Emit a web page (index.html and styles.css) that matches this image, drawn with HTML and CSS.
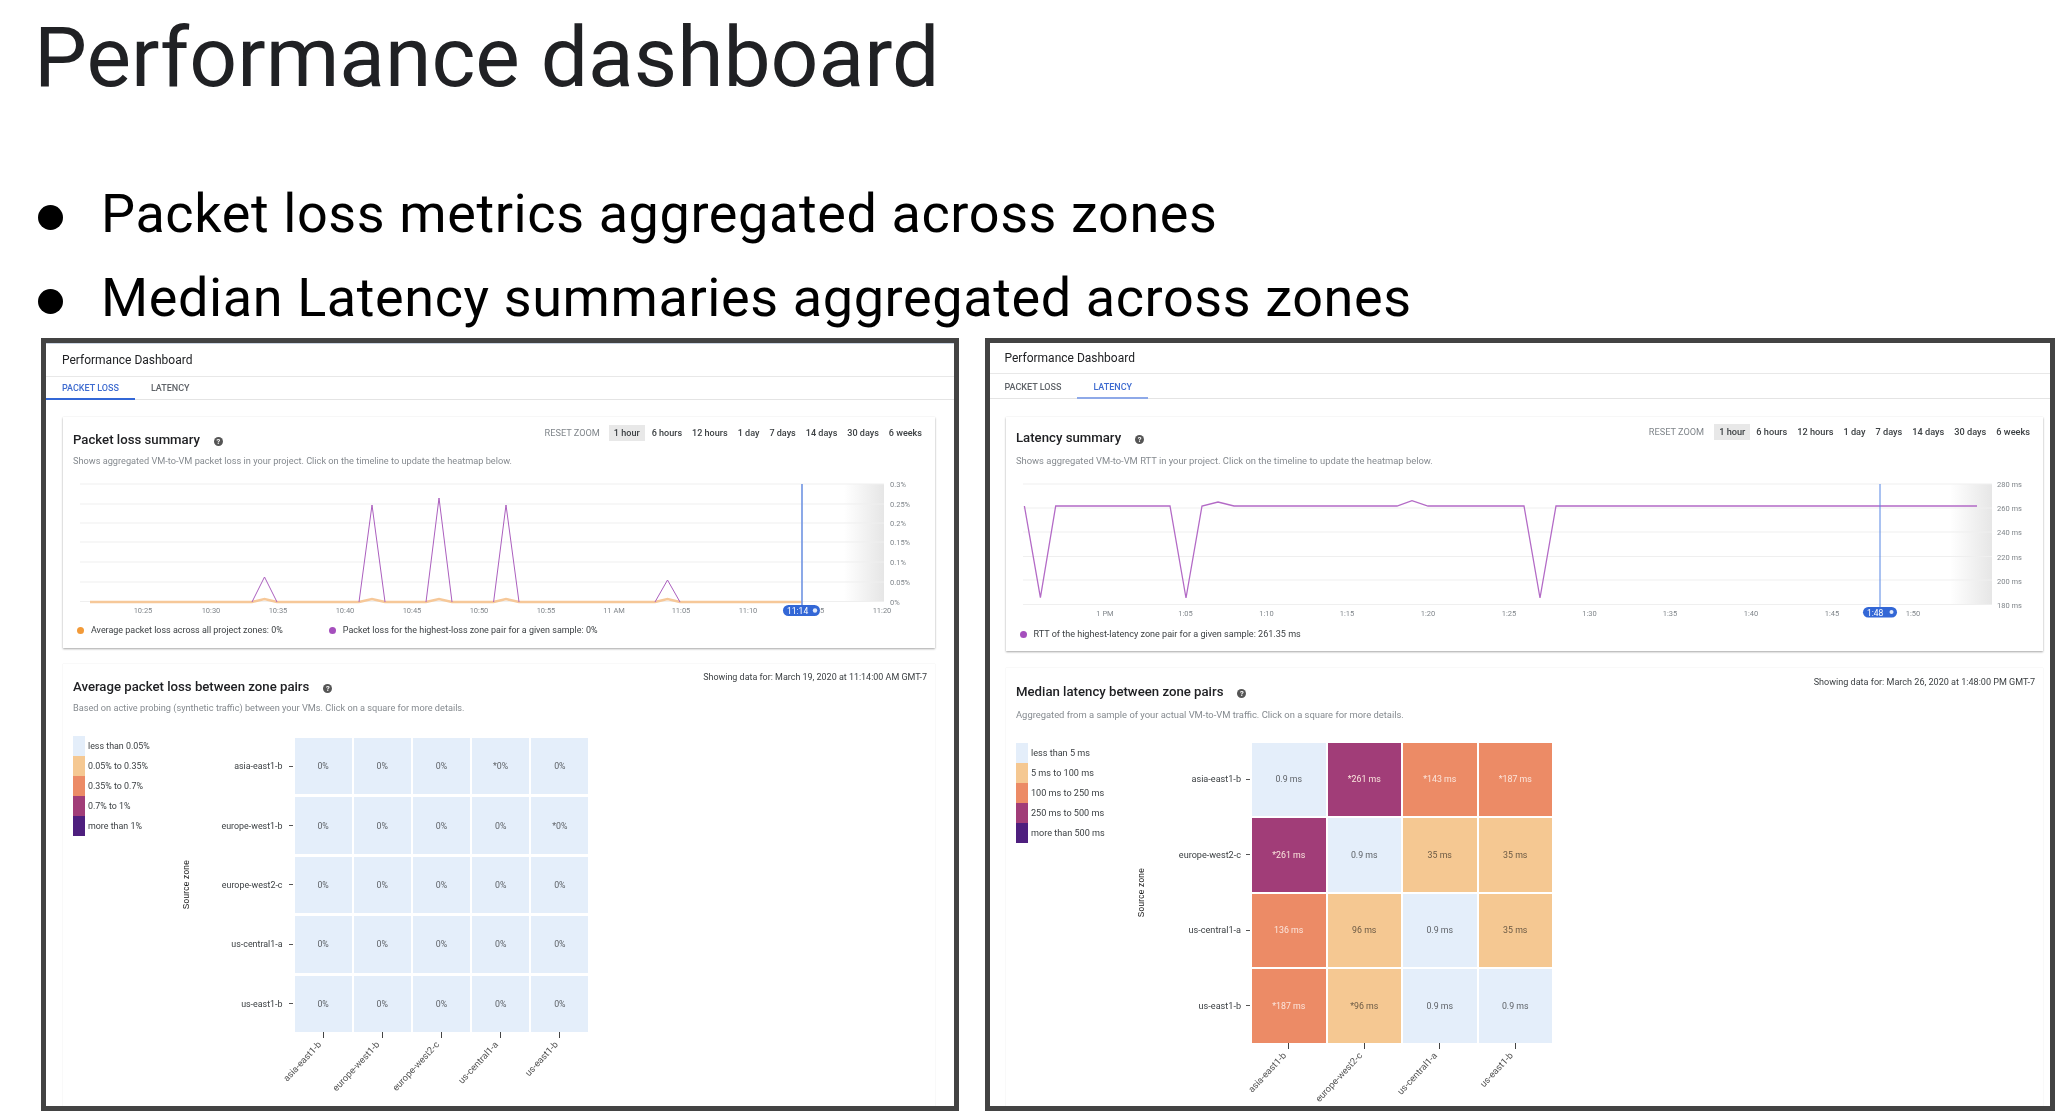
FILE: index.html
```html
<!DOCTYPE html>
<html lang="en">
<head>
<meta charset="utf-8">
<title>Performance dashboard</title>
<link rel="stylesheet" href="styles.css">
</head>
<body>
<main class="slide">
  <h1 class="slide-title">Performance dashboard</h1>
  <ul class="points">
    <li>Packet loss metrics aggregated across zones</li>
    <li>Median Latency summaries aggregated across zones</li>
  </ul>
  <div class="panels">
    <section class="panel panel-loss">
      <div class="panel-inner">
        <header class="app-title">Performance Dashboard</header>
        <nav class="tabs">
          <span class="tab active">PACKET LOSS</span>
          <span class="tab">LATENCY</span>
        </nav>
        <div class="card summary">
          <div class="card-head">
            <h2 class="card-title">Packet loss summary <i class="help">?</i></h2>
            <div class="range">
              <span class="reset">RESET ZOOM</span>
              <span class="sel">1 hour</span><span>6 hours</span><span>12 hours</span><span>1 day</span><span>7 days</span><span>14 days</span><span>30 days</span><span>6 weeks</span>
            </div>
          </div>
          <p class="desc">Shows aggregated VM-to-VM packet loss in your project. Click on the timeline to update the heatmap below.</p>
          <svg class="chart" width="872" height="147" viewBox="63 475 872 147">
            <defs>
              <linearGradient id="fadeA"><stop offset="0" stop-color="#fff"/><stop offset="1" stop-color="#e6e6e6"/></linearGradient>
            </defs>
            <rect x="844" y="484" width="40" height="118" fill="url(#fadeA)"/>
            <path class="grid" d="M80 484H884M80 504H884M80 523H884M80 542H884M80 562H884M80 582H884M80 601.5H884"/>
            <g class="ylab">
              <text x="890" y="487">0.3%</text><text x="890" y="507">0.25%</text><text x="890" y="526">0.2%</text><text x="890" y="545">0.15%</text><text x="890" y="565">0.1%</text><text x="890" y="585">0.05%</text><text x="890" y="605">0%</text>
            </g>
            <g class="xlabs">
              <text x="143" y="613">10:25</text><text x="211" y="613">10:30</text><text x="278" y="613">10:35</text><text x="345" y="613">10:40</text><text x="412" y="613">10:45</text><text x="479" y="613">10:50</text><text x="546" y="613">10:55</text><text x="614" y="613">11 AM</text><text x="681" y="613">11:05</text><text x="748" y="613">11:10</text><text x="815" y="613">11:15</text><text x="882" y="613">11:20</text>
            </g>
            <path class="line-orange" d="M90 602H252L264.5 599L277 602H359L372 599L385 602H426L439 599L452 602H493.6L506 599L519 602H655L667.5 599L680 602H802"/>
            <path class="line-purple" d="M252 602L264.5 577L277 602M359 602L372 505L385 602M426 602L439 498L452 602M493.6 602L506 505L519 602M655 602L667.5 580L680 602"/>
            <path class="cursor" d="M802 484V606"/>
            <rect class="pill" x="783" y="605" width="37" height="11" rx="5.5"/>
            <text class="pill-text" x="787" y="613.5">11:14</text>
            <circle class="pill-dot" cx="815" cy="610.5" r="2.2"/>
          </svg>
          <div class="legend-line">
            <span class="item gap-a"><b class="dot orange"></b>Average packet loss across all project zones: 0%</span>
            <span class="item"><b class="dot purple"></b>Packet loss for the highest-loss zone pair for a given sample: 0%</span>
          </div>
        </div>
        <div class="card heat-card">
          <div class="card-head">
            <div>
              <h2 class="card-title">Average packet loss between zone pairs <i class="help">?</i></h2>
              <p class="desc">Based on active probing (synthetic traffic) between your VMs. Click on a square for more details.</p>
            </div>
            <span class="showing">Showing data for: March 19, 2020 at 11:14:00 AM GMT-7</span>
          </div>
          <div class="heat-body">
            <ul class="scale">
              <li><b class="c1"></b>less than 0.05%</li>
              <li><b class="c2"></b>0.05% to 0.35%</li>
              <li><b class="c3"></b>0.35% to 0.7%</li>
              <li><b class="c4"></b>0.7% to 1%</li>
              <li><b class="c5"></b>more than 1%</li>
            </ul>
            <div class="heat five">
              <span class="source rows5">Source zone</span>
              <span class="rl">asia-east1-b</span><span class="cell c1">0%</span><span class="cell c1">0%</span><span class="cell c1">0%</span><span class="cell c1">*0%</span><span class="cell c1">0%</span>
              <span class="rl">europe-west1-b</span><span class="cell c1">0%</span><span class="cell c1">0%</span><span class="cell c1">0%</span><span class="cell c1">0%</span><span class="cell c1">*0%</span>
              <span class="rl">europe-west2-c</span><span class="cell c1">0%</span><span class="cell c1">0%</span><span class="cell c1">0%</span><span class="cell c1">0%</span><span class="cell c1">0%</span>
              <span class="rl">us-central1-a</span><span class="cell c1">0%</span><span class="cell c1">0%</span><span class="cell c1">0%</span><span class="cell c1">0%</span><span class="cell c1">0%</span>
              <span class="rl">us-east1-b</span><span class="cell c1">0%</span><span class="cell c1">0%</span><span class="cell c1">0%</span><span class="cell c1">0%</span><span class="cell c1">0%</span>
              <span class="axis-gap"></span>
              <div class="xcol"><i></i><div class="xlab"><span>asia-east1-b</span></div></div>
              <div class="xcol"><i></i><div class="xlab"><span>europe-west1-b</span></div></div>
              <div class="xcol"><i></i><div class="xlab"><span>europe-west2-c</span></div></div>
              <div class="xcol"><i></i><div class="xlab"><span>us-central1-a</span></div></div>
              <div class="xcol"><i></i><div class="xlab"><span>us-east1-b</span></div></div>
            </div>
          </div>
        </div>
      </div>
    </section>
    <section class="panel panel-latency">
      <div class="panel-inner">
        <header class="app-title">Performance Dashboard</header>
        <nav class="tabs">
          <span class="tab">PACKET LOSS</span>
          <span class="tab active">LATENCY</span>
        </nav>
        <div class="card summary">
          <div class="card-head">
            <h2 class="card-title">Latency summary <i class="help">?</i></h2>
            <div class="range">
              <span class="reset">RESET ZOOM</span>
              <span class="sel">1 hour</span><span>6 hours</span><span>12 hours</span><span>1 day</span><span>7 days</span><span>14 days</span><span>30 days</span><span>6 weeks</span>
            </div>
          </div>
          <p class="desc">Shows aggregated VM-to-VM RTT in your project. Click on the timeline to update the heatmap below.</p>
          <svg class="chart" width="1036" height="147" viewBox="1006 475 1036 147">
            <defs>
              <linearGradient id="fadeB"><stop offset="0" stop-color="#fff"/><stop offset="1" stop-color="#e6e6e6"/></linearGradient>
            </defs>
            <rect x="1950" y="484" width="42" height="120" fill="url(#fadeB)"/>
            <path class="grid" d="M1023 484H1992M1023 508H1992M1023 532H1992M1023 556.5H1992M1023 580H1992M1023 604.5H1992"/>
            <g class="ylab">
              <text x="1997" y="487">280 ms</text><text x="1997" y="511">260 ms</text><text x="1997" y="535">240 ms</text><text x="1997" y="560">220 ms</text><text x="1997" y="584">200 ms</text><text x="1997" y="608">180 ms</text>
            </g>
            <g class="xlabs">
              <text x="1105" y="616">1 PM</text><text x="1185.5" y="616">1:05</text><text x="1266.5" y="616">1:10</text><text x="1347" y="616">1:15</text><text x="1428" y="616">1:20</text><text x="1509" y="616">1:25</text><text x="1589.5" y="616">1:30</text><text x="1670" y="616">1:35</text><text x="1751" y="616">1:40</text><text x="1832" y="616">1:45</text><text x="1913" y="616">1:50</text>
            </g>
            <path class="line-purple" d="M1024.4 506L1040.4 597.7L1055.7 506H1170L1186 598L1202 506L1218 502L1234 506H1397L1412 500.7L1428 506H1524L1540 598L1556 506H1977"/>
            <path class="cursor thin" d="M1880 484V608"/>
            <rect class="pill" x="1863" y="607" width="34" height="10.5" rx="5.2"/>
            <text class="pill-text" x="1867" y="615.5">1:48</text>
            <circle class="pill-dot" cx="1891.5" cy="612" r="2"/>
          </svg>
          <div class="legend-line">
            <span class="item"><b class="dot purple"></b>RTT of the highest-latency zone pair for a given sample: 261.35 ms</span>
          </div>
        </div>
        <div class="card heat-card">
          <div class="card-head">
            <div>
              <h2 class="card-title">Median latency between zone pairs <i class="help">?</i></h2>
              <p class="desc">Aggregated from a sample of your actual VM-to-VM traffic. Click on a square for more details.</p>
            </div>
            <span class="showing">Showing data for: March 26, 2020 at 1:48:00 PM GMT-7</span>
          </div>
          <div class="heat-body">
            <ul class="scale">
              <li><b class="c1"></b>less than 5 ms</li>
              <li><b class="c2"></b>5 ms to 100 ms</li>
              <li><b class="c3"></b>100 ms to 250 ms</li>
              <li><b class="c4"></b>250 ms to 500 ms</li>
              <li><b class="c5"></b>more than 500 ms</li>
            </ul>
            <div class="heat four">
              <span class="source rows4">Source zone</span>
              <span class="rl">asia-east1-b</span><span class="cell c1">0.9 ms</span><span class="cell c4">*261 ms</span><span class="cell c3">*143 ms</span><span class="cell c3">*187 ms</span>
              <span class="rl">europe-west2-c</span><span class="cell c4">*261 ms</span><span class="cell c1">0.9 ms</span><span class="cell c2">35 ms</span><span class="cell c2">35 ms</span>
              <span class="rl">us-central1-a</span><span class="cell c3">136 ms</span><span class="cell c2">96 ms</span><span class="cell c1">0.9 ms</span><span class="cell c2">35 ms</span>
              <span class="rl">us-east1-b</span><span class="cell c3">*187 ms</span><span class="cell c2">*96 ms</span><span class="cell c1">0.9 ms</span><span class="cell c1">0.9 ms</span>
              <span class="axis-gap"></span>
              <div class="xcol"><i></i><div class="xlab"><span>asia-east1-b</span></div></div>
              <div class="xcol"><i></i><div class="xlab"><span>europe-west2-c</span></div></div>
              <div class="xcol"><i></i><div class="xlab"><span>us-central1-a</span></div></div>
              <div class="xcol"><i></i><div class="xlab"><span>us-east1-b</span></div></div>
            </div>
          </div>
        </div>
      </div>
    </section>
  </div>
</main>
</body>
</html>
```
FILE: styles.css
```css
* { box-sizing: border-box; }
html, body { margin: 0; height: 100%; background: #fff; overflow: hidden; }
body { font-family: Roboto, "Liberation Sans", sans-serif; }

.slide { width: 2069px; height: 1120px; overflow: hidden; display: flex; flex-direction: column; }

.slide-title {
  margin: 8px 0 0; padding-left: 34px;
  font-size: 84px; line-height: 100px; font-weight: 400; color: #202124;
}

.points { list-style: none; margin: 66px 0 0; padding: 0 0 0 38px; }
.points li {
  display: flex; align-items: center; gap: 38px; height: 80px; margin-bottom: 4px;
  font-size: 54px; letter-spacing: .6px; line-height: 80px; color: #000; white-space: nowrap;
}
.points li:last-child { margin-bottom: 0; }
.points li::before {
  content: ""; flex: none; width: 25px; height: 25px; margin-top: 7px;
  border-radius: 50%; background: #000;
}

.panels { display: flex; gap: 25.5px; padding-left: 41px; height: 773px; }

.panel { flex: none; height: 773px; border: 5px solid #434343; background: #fff; overflow: hidden; }
.panel-inner { height: 100%; overflow: hidden; filter: blur(.4px); }
.panel-loss .panel-inner { border-top: 1px solid #cdd6e4; }

.panel-loss {
  width: 918px;
  --title-h: 32px; --tabs-h: 23px; --tab-pt: 5px; --title-pl: 16px;
  --card-l: 16.5px; --card-r: 19px; --card-pl: 10.5px; --card-pr: 8px; --top: 17px;
  --range-mt: 8px; --title-mt: 15px; --desc-mt: 7px; --legend-mt: 2px; --legend-pb: 12px; --gap: 16px;
  --heat-title-mt: 15px; --showing-mt: 7px; --body-mt: 22px; --scale-w: 107px;
  --desc-size: 9.2px; --heat-desc-size: 9.2px; --note-size: 8.95px; --rl-gap: 6px; --scale-size: 8.9px;
  --range-size: 9.05px; --reset-gap: 4px; --sel-gap: 2px;
}
.panel-latency {
  width: 1070.5px;
  --title-h: 30px; --tabs-h: 25px; --tab-pt: 7px; --title-pl: 15px;
  --card-l: 16px; --card-r: 7.5px; --card-pl: 10.5px; --card-pr: 7.5px; --top: 18px;
  --range-mt: 7px; --title-mt: 13px; --desc-mt: 9px; --legend-mt: 6px; --legend-pb: 11px; --gap: 17px;
  --heat-title-mt: 16px; --showing-mt: 8px; --body-mt: 21.5px; --scale-w: 119px;
  --desc-size: 9.4px; --heat-desc-size: 9.4px; --note-size: 9.05px; --rl-gap: 5px; --scale-size: 9.1px;
  --range-size: 9.2px; --reset-gap: 5px; --sel-gap: 1px;
}

.app-title {
  height: calc(var(--title-h) + 1px); padding-left: var(--title-pl);
  border-bottom: 1px solid #e8e8e8;
  font-size: 12px; line-height: calc(var(--title-h) + 1px); color: #202124;
}

.tabs { display: flex; height: var(--tabs-h); border-bottom: 1px solid #e4e4e4; }
.tab {
  padding: var(--tab-pt) 16px 0; font-size: 9px; line-height: 12px; font-weight: 500;
  color: #5f6368; margin-bottom: -1px;
}
.tab.active { color: #3f6cd0; border-bottom: 2px solid #3367d6; }
.panel-latency .tab { padding-left: 15px; padding-right: 16px; }
.panel-latency .tab.active { padding-left: 16px; border-bottom-color: #8ea9e8; }

.card {
  margin: 0 var(--card-r) 0 var(--card-l);
  padding: 0 var(--card-pr) 0 var(--card-pl);
  background: #fff;
}
.summary {
  margin-top: var(--top); padding-bottom: var(--legend-pb);
  box-shadow: 0 1px 2px rgba(0,0,0,.35), 0 0 1px rgba(0,0,0,.08);
}
.heat-card {
  margin-top: var(--gap); height: 480px;
  box-shadow: 0 0 1px rgba(0,0,0,.15);
}

.card-head { display: flex; justify-content: space-between; align-items: flex-start; }
.card-title {
  margin: var(--title-mt) 0 0; font-size: 13.2px; line-height: 16px; font-weight: 500; color: #202124;
  display: flex; align-items: center; gap: 14px; white-space: nowrap;
}
.heat-card .card-title { margin-top: var(--heat-title-mt); }
.help {
  display: block; width: 9px; height: 9px; margin-top: 2px; border-radius: 50%; background: #555; color: #fff;
  font: normal 700 7.5px/9px Roboto, sans-serif; text-align: center;
}

.range { display: flex; margin-top: var(--range-mt); font-size: var(--range-size); line-height: 16px; font-weight: 500; color: #3c4043; white-space: nowrap; }
.range span { padding: 0 5px; }
.range .reset { color: #80868b; font-weight: 400; font-size: 9.2px; margin-right: var(--reset-gap); }
.range .sel { background: #e8e8e8; margin-right: var(--sel-gap); }

.desc { margin: var(--desc-mt) 0 0; font-size: var(--desc-size); line-height: 12px; color: #858a8f; white-space: nowrap; }
.heat-card .desc { font-size: var(--heat-desc-size); }

.chart { display: block; margin: 8px 0 0 calc(-1 * var(--card-pl)); overflow: visible; }
.grid { stroke: #efefef; stroke-width: 1; fill: none; }
.ylab text, .xlabs text { font-size: 7.5px; fill: #80868b; font-family: Roboto, sans-serif; }
.xlabs text { text-anchor: middle; }
.line-orange { fill: none; stroke: #f6c899; stroke-width: 2.5; }
.line-purple { fill: none; stroke: #ab5fbe; stroke-width: 1; }
.panel-latency .line-purple { stroke: #b36ac6; stroke-width: 1.3; }
.cursor { stroke: #6f93e2; stroke-width: 1.6; }
.cursor.thin { stroke: #5585e4; stroke-width: 1; }
.pill { fill: #3367d6; }
.pill-text { font-size: 8.5px; fill: #fff; font-family: Roboto, sans-serif; }
.pill-dot { fill: #dfe8fb; }

.legend-line { margin-top: var(--legend-mt); display: flex; font-size: var(--note-size); line-height: 12px; color: #3c4043; white-space: nowrap; }
.item { display: flex; align-items: center; gap: 7px; padding-left: 4px; }
.panel-latency .item { padding-left: 3.5px; gap: 7px; }
.gap-a { margin-right: 42px; }
.dot { display: block; width: 7px; height: 7px; border-radius: 50%; }
.orange { background: #f29a38; }
.purple { background: #a54fbd; }

.showing { margin-top: var(--showing-mt); font-size: var(--note-size); line-height: 12px; color: #3c4043; white-space: nowrap; }

.heat-body { display: flex; align-items: flex-start; margin-top: var(--body-mt); }
.scale { list-style: none; margin: 0; padding: 0; flex: none; width: var(--scale-w); font-size: var(--scale-size); color: #3c4043; }
.scale li { display: flex; align-items: center; gap: 3px; height: 20px; white-space: nowrap; }
.scale b { display: block; flex: none; width: 12px; height: 20px; }

.c1 { background: #e4eefa; }
.c2 { background: #f5c892; }
.c3 { background: #ec8b66; }
.c4 { background: #a13d78; }
.c5 { background: #4e1f7e; }

.heat { display: grid; flex: none; column-gap: 2px; }
.heat.five {
  margin-top: 2px;
  grid-template-columns: 12px 98.5px repeat(5, 57.2px);
  grid-template-rows: repeat(5, 56.4px) auto;
  row-gap: 3px;
}
.heat.four {
  grid-template-columns: 12px 101px repeat(4, 73.5px);
  grid-template-rows: repeat(4, 73.5px) auto;
  row-gap: 2px;
}
.source {
  grid-column: 1; align-self: center; justify-self: center;
  writing-mode: vertical-rl; transform: rotate(180deg);
  font: 500 8.4px/12px "Liberation Sans", sans-serif; letter-spacing: .2px; color: #111; white-space: nowrap;
}
.rows5 { grid-row: 1 / span 5; }
.rows4 { grid-row: 1 / span 4; }
.rl {
  grid-column: 2; display: flex; align-items: center; justify-content: flex-end;
  font-size: var(--scale-size); color: #3c4043; white-space: nowrap;
}
.rl::after { content: ""; flex: none; width: 4px; height: 1px; margin-left: var(--rl-gap); background: #555; }
.cell { display: flex; align-items: center; justify-content: center; font-size: 8.8px; color: #5f6368; }
.cell.c2 { color: #6b5a45; }
.cell.c3, .cell.c4 { color: #fbe6dd; }

.axis-gap { grid-column: 2; }
.xcol { height: 80px; margin-top: -3px; }
.heat.four .xcol { margin-top: -2px; }
.xcol i { display: block; width: 1px; height: 6px; margin: 0 auto; background: #444; }
.xlab { display: flex; justify-content: flex-end; width: 50%; margin-top: 0; padding-right: 4px; }
.xlab span {
  flex: none; font-size: 9.3px; line-height: 10px; color: #555; white-space: nowrap;
  transform-origin: 100% 50%; transform: rotate(-47deg);
}
```
